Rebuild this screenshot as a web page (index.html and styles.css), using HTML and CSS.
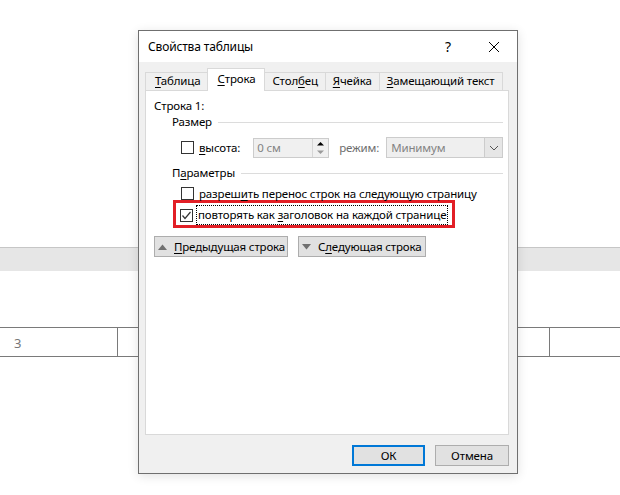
FILE: index.html
```html
<!DOCTYPE html>
<html lang="ru">
<head>
  <meta charset="UTF-8" />
  <title>Свойства таблицы</title>
  <link rel="stylesheet" href="styles.css">
</head>
<body>
  <div class="doc">
    <div class="band"></div>
    <div class="doc-row">
      <div class="cell">3</div>
      <div class="cell"></div>
      <div class="cell"></div>
    </div>
  </div>

  <div class="dialog">
    <div class="titlebar">
      <span class="title">Свойства таблицы</span>
      <span class="title-btn">?</span>
      <span class="title-btn close">
        <svg width="12" height="12" viewBox="0 0 12 12"><path d="M1 1 L11 11 M11 1 L1 11" stroke="#000" stroke-width="1"/></svg>
      </span>
    </div>

    <div class="dialog-body">
      <div class="tabs">
        <div class="tab"><u>Т</u>аблица</div>
        <div class="tab active"><u>С</u>трока</div>
        <div class="tab">Стол<u>б</u>ец</div>
        <div class="tab"><u>Я</u>чейка</div>
        <div class="tab"><u>З</u>амещающий текст</div>
      </div>

      <div class="panel">
        <div class="caption">Строка 1:</div>
        <div class="group">Размер</div>
        <div class="size-row">
          <span class="checkbox"></span>
          <span class="label"><u>в</u>ысота:</span>
          <div class="spin">
            <span class="spin-value">0 см</span>
            <span class="spin-btns">
              <svg width="15" height="9" viewBox="0 0 15 9"><path d="M4 6.5 L7.5 3 L11 6.5 Z" fill="#000"/></svg>
              <svg width="15" height="9" viewBox="0 0 15 9"><path d="M4 2.5 L7.5 6 L11 2.5 Z" fill="#9a9a9a"/></svg>
            </span>
          </div>
          <span class="label muted">режим:</span>
          <div class="select">
            <span class="select-value">Минимум</span>
            <span class="select-arrow">
              <svg width="10" height="6" viewBox="0 0 10 6"><polyline points="1,1 5,5 9,1" fill="none" stroke="#555" stroke-width="1"/></svg>
            </span>
          </div>
        </div>

        <div class="group">П<u>а</u>раметры</div>
        <div class="opt">
          <span class="checkbox"></span>
          <span class="label">разреш<u>и</u>ть перенос строк на следующую страницу</span>
        </div>
        <div class="highlight">
          <div class="opt">
            <span class="checkbox">
              <svg width="11" height="11" viewBox="0 0 11 11"><polyline points="1.5,5.5 4,8.5 9.5,2" fill="none" stroke="#333" stroke-width="1.2"/></svg>
            </span>
            <span class="label focus">повторять как <u>з</u>аголовок на каждой странице</span>
          </div>
        </div>

        <div class="nav-btns">
          <button class="btn nav">
            <svg width="9" height="6" viewBox="0 0 9 6"><path d="M0 6 L4.5 0.5 L9 6 Z" fill="#707070"/></svg>
            <span><u>П</u>редыдущая строка</span>
          </button>
          <button class="btn nav">
            <svg width="9" height="6" viewBox="0 0 9 6"><path d="M0 0 L4.5 5.5 L9 0 Z" fill="#707070"/></svg>
            <span>С<u>л</u>едующая строка</span>
          </button>
        </div>
      </div>

      <div class="footer">
        <button class="btn default">ОК</button>
        <button class="btn">Отмена</button>
      </div>
    </div>
  </div>
</body>
</html>
```

FILE: styles.css
```css
* {
  margin: 0;
  padding: 0;
  box-sizing: border-box;
}

body {
  background-color: white;
  font-family: "Noto Sans", "Open Sans", sans-serif;
  font-size: 11.5px;
  letter-spacing: -0.15px;
  color: #000;
}

u {
  text-decoration: underline;
  text-underline-offset: 2px;
}

/* document behind the dialog */

.band {
  margin-top: 247px;
  height: 24px;
  background-color: #e6e6e6;
  border-top: 1px solid #c6c6c6;
}

.doc-row {
  margin-top: 56px;
  height: 30px;
  display: grid;
  grid-template-columns: 118px 432px 1fr;
  border-top: 1px solid #7a7a7a;
  border-bottom: 1px solid #7a7a7a;
}

.doc-row .cell {
  padding: 6px 0 0 14px;
  color: #777;
  font-size: 13px;
  border-right: 1px solid #7a7a7a;
}

.doc-row .cell:last-child {
  border-right: none;
}

/* dialog */

.dialog {
  position: absolute;
  left: 138px;
  top: 30px;
  width: 380px;
  height: 444px;
  background-color: #f0f0f0;
  border: 1px solid #6f6f6f;
  box-shadow: 0 2px 10px rgba(0,0,0,0.12);
}

.titlebar {
  height: 31px;
  display: flex;
  align-items: center;
  background-color: white;
  padding-left: 9px;
  font-size: 12px;
}

.title {
  flex: 1;
}

.title-btn {
  width: 46px;
  height: 31px;
  display: flex;
  align-items: center;
  justify-content: center;
  font-size: 14px;
}

.dialog-body {
  padding: 6px 8px 0 6px;
}

.tabs {
  display: flex;
  align-items: flex-end;
  height: 22px;
  position: relative;
  z-index: 1;
  white-space: nowrap;
}

.tab {
  height: 18px;
  line-height: 16px;
  padding: 0 7px;
  border: 1px solid #d9d9d9;
  border-bottom: none;
  margin-right: -1px;
  background-color: #f0f0f0;
}

.tab:first-child {
  padding-left: 9px;
}

.tab.active {
  line-height: 20px;
  background-color: white;
  padding: 0 9px;
  margin-bottom: -1px;
  height: 23px;
}

.panel {
  height: 345px;
  background-color: white;
  border: 1px solid #d9d9d9;
  padding: 7px 5px 0 8px;
}

.caption {
  line-height: 16px;
}

.group {
  display: flex;
  align-items: center;
  line-height: 16px;
  padding-left: 18px;
}

.group::after {
  content: "";
  flex: 1;
  border-top: 1px solid #dcdcdc;
  margin-left: 6px;
}

.size-row {
  display: flex;
  align-items: center;
  height: 21px;
  margin-top: 7px;
  margin-bottom: 7px;
  padding-left: 27px;
}

.checkbox {
  width: 13px;
  height: 13px;
  border: 1px solid #333;
  background-color: white;
  display: flex;
  align-items: center;
  justify-content: center;
  flex-shrink: 0;
}

.label {
  margin-left: 5px;
  white-space: nowrap;
}

.muted {
  color: #6d6d6d;
  margin-left: 10px;
}

.spin {
  display: flex;
  width: 76px;
  height: 20px;
  margin-left: 13px;
  border: 1px solid #cccccc;
  background-color: #f0f0f0;
}

.spin-value {
  flex: 1;
  padding-left: 3px;
  line-height: 18px;
  color: #838383;
}

.spin-btns {
  width: 16px;
  display: flex;
  flex-direction: column;
  border-left: 1px solid #d6d6d6;
}

.spin-btns svg {
  display: block;
}

.select {
  display: flex;
  width: 117px;
  height: 21px;
  margin-left: 7px;
  border: 1px solid #cccccc;
  background-color: #efefef;
}

.select-value {
  flex: 1;
  padding-left: 4px;
  line-height: 19px;
  color: #838383;
}

.select-arrow {
  width: 18px;
  border-left: 1px solid #cccccc;
  background-color: #e6e6e6;
  display: flex;
  align-items: center;
  justify-content: center;
}

.opt {
  display: flex;
  align-items: center;
  height: 16px;
  padding-left: 27px;
  margin-top: 4px;
}

.highlight {
  width: 282px;
  height: 28px;
  margin-left: 19px;
  margin-top: -1px;
  border: 3px solid #e21f26;
  padding-top: 2px;
}

.highlight .opt {
  padding-left: 4px;
  margin-top: 0;
  height: 20px;
}

.focus {
  margin-left: 3px;
  padding: 0 1px;
  line-height: 18px;
  border: 1px dotted #000;
}

.nav-btns {
  display: flex;
  gap: 10px;
  margin-top: 8px;
}

.btn {
  height: 21px;
  font-family: inherit;
  font-size: 11.5px;
  letter-spacing: -0.15px;
  color: #000;
  background-color: #e1e1e1;
  border: 1px solid #adadad;
  display: flex;
  align-items: center;
  justify-content: center;
  white-space: nowrap;
}

.btn.nav {
  justify-content: flex-start;
  padding-left: 3px;
  gap: 7px;
}

.btn.nav:first-child {
  width: 134px;
}

.btn.nav:last-child {
  width: 128px;
}

.footer {
  display: flex;
  justify-content: flex-end;
  gap: 10px;
  margin-top: 10px;
}

.footer .btn {
  width: 74px;
}

.footer .btn.default {
  width: 73px;
  border: 2px solid #0078d7;
}
```
